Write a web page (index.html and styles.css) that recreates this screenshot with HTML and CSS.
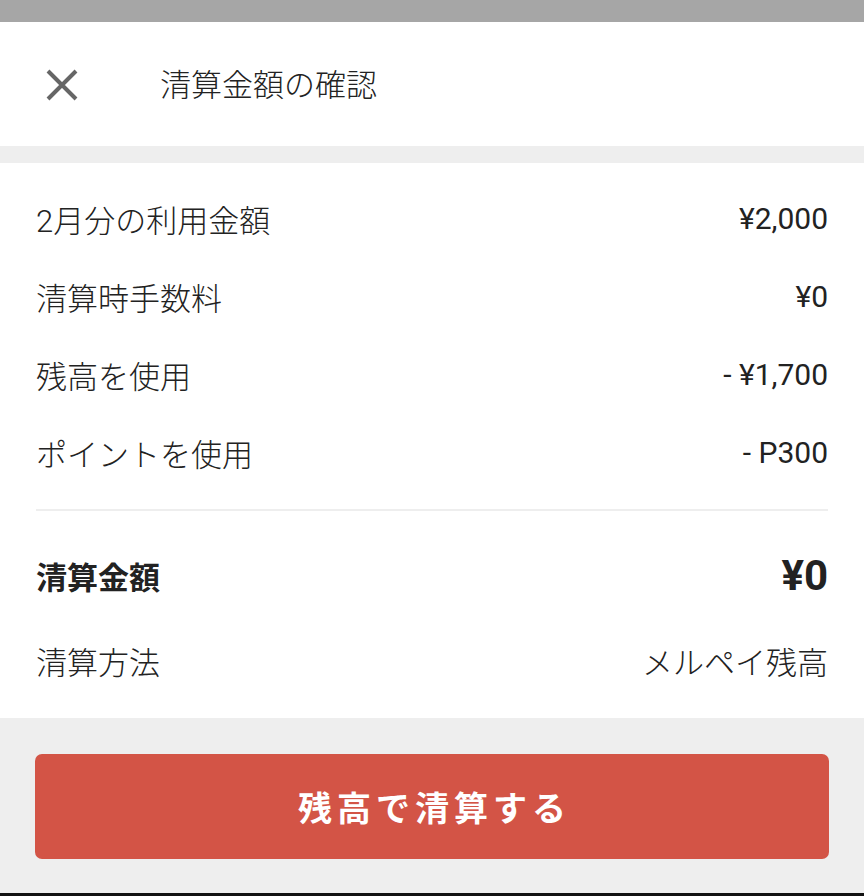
FILE: index.html
```html
<!DOCTYPE html>
<html lang="ja">
<head>
<meta charset="utf-8">
<link rel="stylesheet" href="styles.css">
</head>
<body>
<div class="statusbar"></div>
<header class="header">
  <svg class="close" viewBox="0 0 34 34" width="34" height="34"><path d="M3 3 L31 31 M31 3 L3 31" stroke="#666" stroke-width="4" fill="none"/></svg>
  <h1 class="title">清算金額の確認</h1>
</header>
<div class="sep"></div>
<main class="content">
  <div class="rows">
    <div class="row"><span>2月分の利用金額</span><span class="num">¥2,000</span></div>
    <div class="row"><span>清算時手数料</span><span class="num">¥0</span></div>
    <div class="row"><span>残高を使用</span><span class="num">- ¥1,700</span></div>
    <div class="row"><span>ポイントを使用</span><span class="num">- P300</span></div>
  </div>
  <div class="divider"></div>
  <div class="summary">
    <div class="row total"><span>清算金額</span><span class="num big">¥0</span></div>
    <div class="row"><span>清算方法</span><span>メルペイ残高</span></div>
  </div>
</main>
<footer class="footer">
  <button class="pay">残高で清算する</button>
</footer>
</body>
</html>
```
FILE: styles.css
```css
* { box-sizing: border-box; }
html, body { margin: 0; padding: 0; }
body {
  width: 864px;
  height: 896px;
  font-family: Roboto, "Noto Sans CJK JP", sans-serif;
  color: #222;
  background: #eeeeee;
  display: flex;
  flex-direction: column;
}
.statusbar { height: 22px; background: #a6a6a6; }
.header {
  height: 124px;
  background: #fff;
  display: flex;
  align-items: center;
  padding-left: 45px;
}
.close { display: block; margin-top: 1px; }
.title {
  margin: 0 0 4px 81px;
  font-size: 31px;
  font-weight: 300;
  color: #222;
}
.sep { height: 17px; background: #eeeeee; }
.content {
  background: #fff;
  padding: 18px 36px 17px 36px;
}
.row {
  height: 78px;
  display: flex;
  justify-content: space-between;
  align-items: center;
  font-size: 31px;
  font-weight: 300;
  padding-bottom: 3px;
}
.num { font-size: 30px; font-weight: 400; }
.divider {
  height: 2px;
  background: #eeeeee;
  margin-top: 16px;
}
.summary { padding-top: 20px; }
.row.total { height: 92px; font-weight: 700; }
.big { font-size: 42px; font-weight: 700; }
.footer {
  flex: 1;
  background: #eeeeee;
  padding: 36px 35px 0 35px;
  border-bottom: 3px solid #111;
}
.pay {
  width: 794px;
  height: 105px;
  border: none;
  border-radius: 7px;
  background: #d35446;
  color: #fff;
  font-family: Roboto, "Noto Sans CJK JP", sans-serif;
  font-size: 34px;
  font-weight: 700;
  letter-spacing: 5px;
  text-indent: 5px;
  padding-bottom: 2px;
  display: block;
}
```
